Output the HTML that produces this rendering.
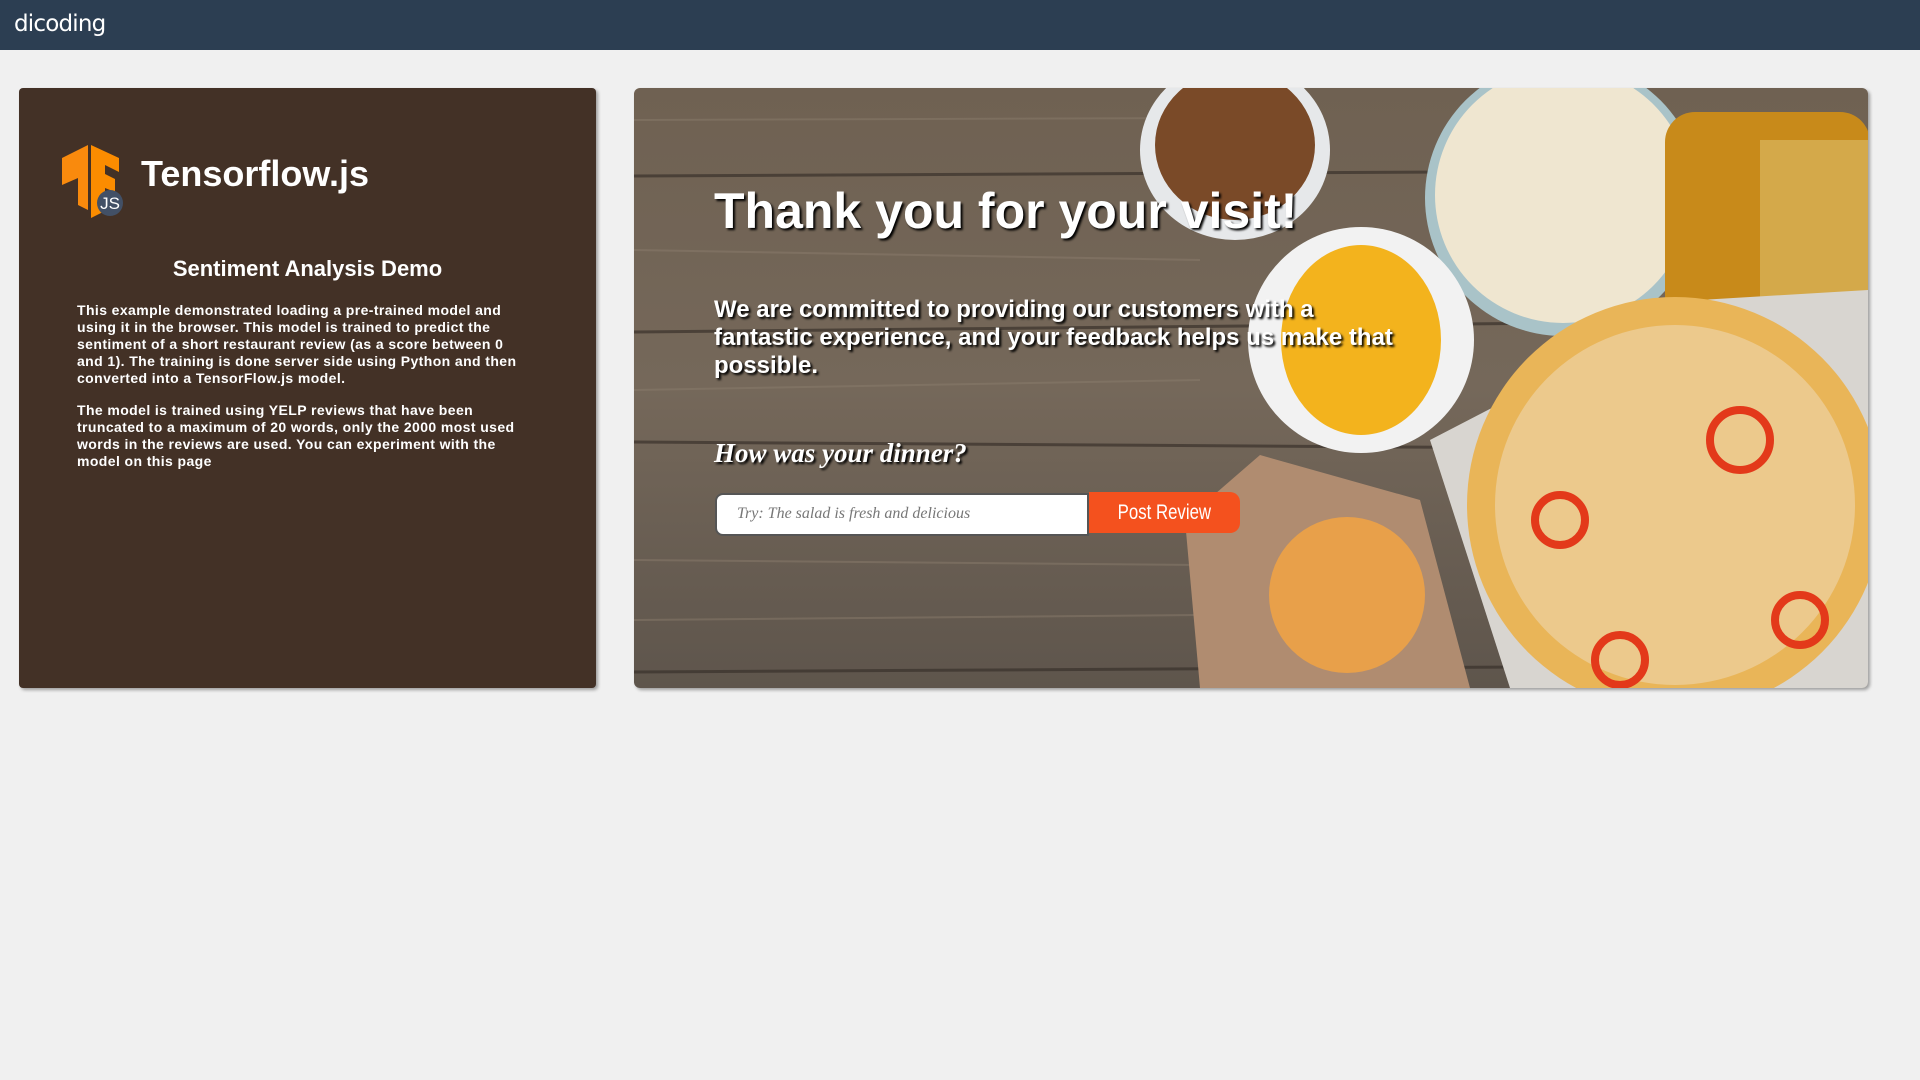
<!DOCTYPE html>
<html><head><meta charset="utf-8"><style>
*{margin:0;padding:0;box-sizing:border-box}
body{width:1920px;height:1080px;background:#f0f0f0;font-family:"Liberation Sans",sans-serif;position:relative;overflow:hidden}
.nav{position:absolute;left:0;top:0;width:1920px;height:50px;background:#2c3e52}
.logo{position:absolute;left:14px;top:11px;color:#fff;font-size:23px;letter-spacing:-0.8px;font-family:"DejaVu Sans","Liberation Sans",sans-serif}
.left{position:absolute;left:19px;top:88px;width:577px;height:600px;background:#433126;border-radius:4px;box-shadow:2px 2px 3px rgba(0,0,0,.35)}
.tf{position:absolute;left:122px;top:65px;color:#fff;font-size:36px;font-weight:bold}
.sad{position:absolute;left:0;width:577px;top:168px;text-align:center;color:#fff;font-size:22px;font-weight:bold}
.p{position:absolute;left:58px;width:500px;color:#fff;font-size:14px;font-weight:bold;line-height:17px;white-space:nowrap;letter-spacing:0.4px}
.right{position:absolute;left:634px;top:88px;width:1234px;height:600px;border-radius:6px;overflow:hidden;box-shadow:2px 2px 3px rgba(0,0,0,.35)}
.t{position:absolute;color:#fff;font-weight:bold;text-shadow:2px 2px 2px #000;white-space:nowrap}
</style></head><body>
<div class="nav"><div class="logo">dicoding</div></div>
<div class="left">
<svg style="position:absolute;left:42px;top:56px" width="80" height="80" viewBox="0 0 80 80">
<polygon points="1,14 27,1 27,66 17,61 17,34 1,41" fill="#f98a0d"/>
<polygon points="30,1 58,14 58,28 44,21 44,30 54,35 54,48 44,44 44,67 30,74" fill="#fb8c00"/>
<circle cx="49" cy="59" r="13" fill="#425066"/>
<text x="49" y="65" text-anchor="middle" font-family="Liberation Sans" font-size="17" fill="#fff">JS</text>
</svg>
<div class="tf">Tensorflow.js</div>
<div class="sad">Sentiment Analysis Demo</div>
<div class="p" style="top:214px">This example demonstrated loading a pre-trained model and<br>using it in the browser. This model is trained to predict the<br>sentiment of a short restaurant review (as a score between 0<br>and 1). The training is done server side using Python and then<br>converted into a TensorFlow.js model.</div>
<div class="p" style="top:314px">The model is trained using YELP reviews that have been<br>truncated to a maximum of 20 words, only the 2000 most used<br>words in the reviews are used. You can experiment with the<br>model on this page</div>
</div>
<div class="right">
<svg width="1234" height="600" viewBox="634 88 1234 600" style="position:absolute;left:0;top:0">
<defs><linearGradient id="w" x1="0" y1="0" x2="0" y2="1">
<stop offset="0" stop-color="#6f6152"/><stop offset=".5" stop-color="#75685a"/><stop offset="1" stop-color="#5e554c"/></linearGradient></defs>
<rect x="634" y="88" width="1234" height="600" fill="url(#w)"/>
<g stroke="#3a322b" stroke-width="3" opacity=".7">
<line x1="634" y1="176" x2="1868" y2="170"/><line x1="634" y1="332" x2="1868" y2="320"/>
<line x1="634" y1="442" x2="1868" y2="450"/><line x1="634" y1="672" x2="1868" y2="665"/></g>
<g stroke="#8a7c6c" stroke-width="2" opacity=".5">
<line x1="634" y1="120" x2="1200" y2="118"/><line x1="634" y1="250" x2="1200" y2="260"/><line x1="634" y1="390" x2="1200" y2="380"/><line x1="634" y1="560" x2="1200" y2="565"/><line x1="634" y1="620" x2="1200" y2="615"/></g>
<ellipse cx="1235" cy="150" rx="95" ry="90" fill="#e6e8ea"/>
<ellipse cx="1235" cy="145" rx="80" ry="75" fill="#7a4a28"/>
<circle cx="1563" cy="198" r="138" fill="#a9c3c8"/>
<circle cx="1563" cy="195" r="128" fill="#efe6d0"/>
<rect x="1665" y="112" width="205" height="215" rx="30" fill="#c88a1a"/>
<rect x="1760" y="140" width="110" height="160" fill="#d4a94a"/>
<polygon points="1430,440 1700,300 1868,290 1868,688 1510,688" fill="#d8d5d0"/>
<circle cx="1361" cy="340" r="113" fill="#f2f2f2"/>
<ellipse cx="1361" cy="340" rx="80" ry="95" fill="#f3b31d"/>
<polygon points="1185,520 1260,455 1420,500 1470,688 1200,688" fill="#b08c70"/>
<circle cx="1347" cy="595" r="78" fill="#e8a04a"/>
<circle cx="1675" cy="505" r="208" fill="#e9b558"/>
<circle cx="1675" cy="505" r="180" fill="#ecc98c"/>
<g fill="none" stroke="#e3391a" stroke-width="8">
<circle cx="1560" cy="520" r="25"/><circle cx="1740" cy="440" r="30"/><circle cx="1800" cy="620" r="25"/><circle cx="1620" cy="660" r="25"/></g>
</svg>
<div class="t" style="left:80px;top:94px;font-size:50px">Thank you for your visit!</div>
<div class="t" style="left:80px;top:208px;font-size:24px;line-height:28px">We are committed to providing our customers with a<br>fantastic experience, and your feedback helps us make that<br>possible.</div>
<div class="t" style="left:80px;top:350px;font-size:27px;font-style:italic;font-family:'Liberation Serif',serif">How was your dinner?</div>
<div style="position:absolute;left:81px;top:405px;width:374px;height:43px;background:#fff;border:2px solid #555;border-radius:8px 0 0 8px;color:#777;font-family:'Liberation Serif',serif;font-style:italic;font-size:16px;padding:10px 0 0 20px">Try: The salad is fresh and delicious</div>
<div style="position:absolute;left:455px;top:404px;width:151px;height:41px;background:#f4511e;border-radius:0 10px 10px 0;color:#fff;text-align:center;line-height:41px"><span style="display:inline-block;font-size:21px;transform:scaleX(.8)">Post Review</span></div>
</div>
</body></html>
